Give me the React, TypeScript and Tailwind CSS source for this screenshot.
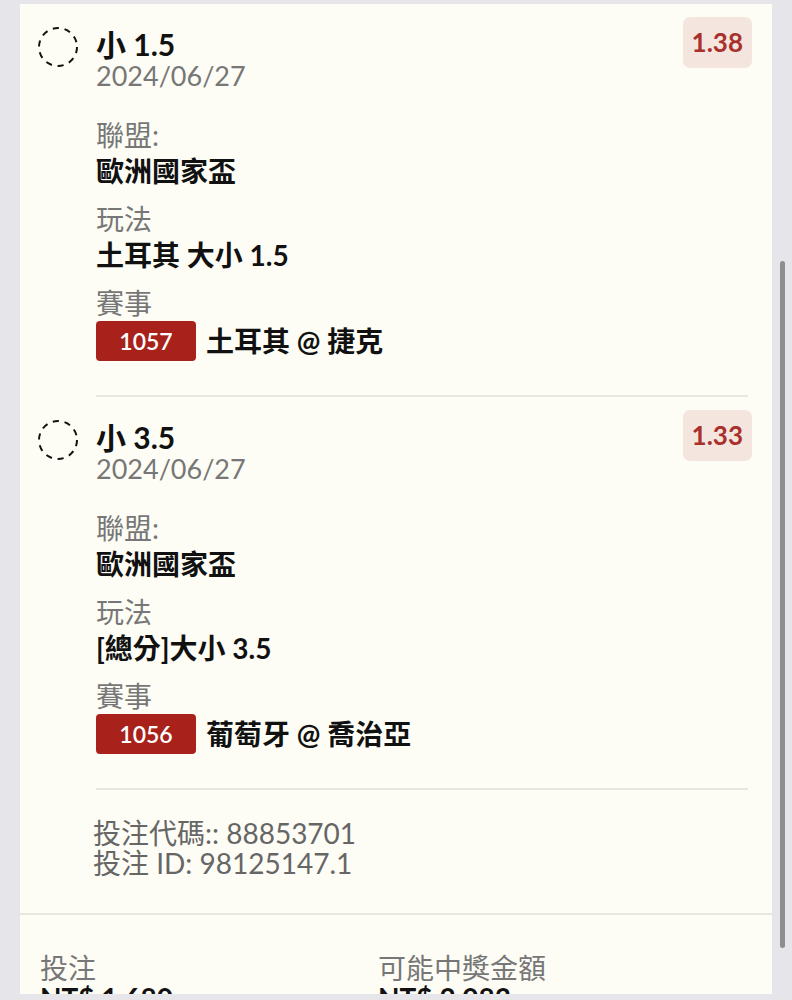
import React from "react";

const FONT = { fontFamily: 'Lato, "Noto Sans CJK TC", "Noto Sans", sans-serif' };

function DashedCircle() {
  return (
    <svg width="40" height="40" viewBox="0 0 40 40">
      <circle cx="20" cy="20" r="19" fill="none" stroke="#111" strokeWidth="2" strokeDasharray="6.2 5.75" />
    </svg>
  );
}

type Bet = {
  title: string;
  date: string;
  odds: string;
  league: string;
  play: string;
  code: string;
  match: string;
};

function BetItem({ bet }: { bet: Bet }) {
  return (
    <div className="flex pt-[24px] pb-[34px]">
      <div className="w-[40px] mr-[18px] shrink-0 -mt-[1px]">
        <DashedCircle />
      </div>
      <div className="flex-1">
        <div className="flex justify-between items-start">
          <div>
            <div className="text-[30px] leading-[32px] font-bold text-[#111]">{bet.title}</div>
            <div className="text-[27px] leading-[32px] text-[#777]">{bet.date}</div>
          </div>
          <div className="-mt-[11px] h-[51px] px-[9px] rounded-[7px] bg-[#f4e6df] flex items-center text-[26px] font-bold text-[#a8312c]">
            {bet.odds}
          </div>
        </div>
        <div className="mt-[25px]">
          <div className="text-[28px] leading-[36px] text-[#777]">聯盟:</div>
          <div className="text-[28px] leading-[36px] font-bold text-[#111]">{bet.league}</div>
          <div className="mt-[12px] text-[28px] leading-[36px] text-[#777]">玩法</div>
          <div className="text-[28px] leading-[36px] font-bold text-[#111]">{bet.play}</div>
          <div className="mt-[12px] text-[28px] leading-[36px] text-[#777]">賽事</div>
          <div className="flex items-center">
            <div className="w-[100px] h-[40px] rounded-[4px] bg-[#a8221b] flex items-center justify-center text-[23px] font-semibold text-white">
              {bet.code}
            </div>
            <div className="ml-[10px] text-[28px] leading-[36px] font-bold text-[#111]">{bet.match}</div>
          </div>
        </div>
      </div>
    </div>
  );
}

export default function App() {
  const bets: Bet[] = [
    {
      title: "小 1.5",
      date: "2024/06/27",
      odds: "1.38",
      league: "歐洲國家盃",
      play: "土耳其 大小 1.5",
      code: "1057",
      match: "土耳其 @ 捷克",
    },
    {
      title: "小 3.5",
      date: "2024/06/27",
      odds: "1.33",
      league: "歐洲國家盃",
      play: "[總分]大小 3.5",
      code: "1056",
      match: "葡萄牙 @ 喬治亞",
    },
  ];

  return (
    <div className="relative h-[1000px] w-[792px] bg-[#e5e5ea] pt-[4px] pl-[20px] overflow-hidden" style={FONT}>
      <div className="w-[752px] h-[990px] bg-[#fdfdf5] overflow-hidden">
        <div className="pl-[18px] pr-[20px]">
          <BetItem bet={bets[0]} />
          <div className="ml-[58px] mr-[4px] h-[2px] bg-[#e7e7df]" />
          <BetItem bet={bets[1]} />
          <div className="ml-[58px] mr-[4px] h-[2px] bg-[#e7e7df]" />
          <div className="pl-[55px] pt-[28px] pb-[35px] text-[28px] leading-[30px] text-[#666]">
            <div>投注代碼:: 88853701</div>
            <div>投注 ID: 98125147.1</div>
          </div>
        </div>
        <div className="h-[2px] bg-[#e7e7df]" />
        <div className="flex pl-[20px] pt-[38px]">
          <div className="w-[338px]">
            <div className="text-[28px] leading-[30px] text-[#777]">投注</div>
            <div className="text-[28px] leading-[30px] font-bold text-[#111]">NT$ 1,680</div>
          </div>
          <div>
            <div className="text-[28px] leading-[30px] text-[#777]">可能中獎金額</div>
            <div className="text-[28px] leading-[30px] font-bold text-[#111]">NT$ 2,083</div>
          </div>
        </div>
      </div>
      <div className="absolute left-[780px] top-[261px] w-[5px] h-[687px] rounded-full bg-[#8e8e8e]" />
    </div>
  );
}
